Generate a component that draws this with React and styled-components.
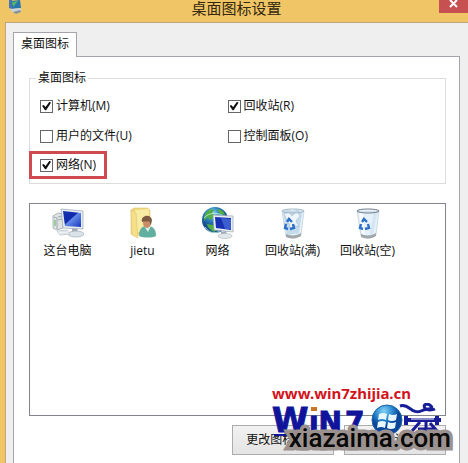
import React, { useState } from 'react';
import styled, { createGlobalStyle } from 'styled-components';

const GlobalStyle = createGlobalStyle`
  * { box-sizing: border-box; }
  body {
    margin: 0;
    overflow: hidden;
    color: #111;
    font: 12px/16px "Open Sans", "Noto Sans CJK SC", sans-serif;
  }
  button, input { font: inherit; color: inherit; }
`;

const Window = styled.main`
  display: flex;
  flex-direction: column;
  min-height: 100vh;
  padding-left: 5px;
  background: #efc566;
`;

const TitleBar = styled.header`
  display: grid;
  grid-template-columns: 34px 1fr 34px;
  align-items: start;
  height: 22px;
`;

const TitleIcon = styled.svg`
  width: 16px;
  height: 16px;
  margin-left: 2px;
`;

const Title = styled.h1`
  margin: 0;
  font-size: 15px;
  line-height: 16px;
  font-weight: 400;
  text-align: center;
  color: #33270f;
`;

const CloseButton = styled.button`
  justify-self: end;
  display: flex;
  justify-content: center;
  width: 29px;
  height: 13px;
  padding: 0;
  border: 0;
  background: #c75050;
`;

const Client = styled.div`
  flex: 1;
  display: flex;
  flex-direction: column;
  padding: 9px 8px 0 7px;
  border: solid #bda680;
  border-width: 1px 0 0 1px;
  background: #f0efef;
`;

const Tab = styled.button`
  align-self: flex-start;
  height: 25px;
  margin-bottom: -1px;
  padding: 0 7px 2px;
  border: 1px solid #a5a3ab;
  border-bottom: 0;
  background: #fff;
  z-index: 1;
`;

const Panel = styled.section`
  flex: 1;
  padding: 13px 13px 8px 15px;
  border: solid #a5a3ab;
  border-width: 1px 1px 0;
  background: #fff;
`;

const Group = styled.fieldset`
  display: grid;
  grid-template-columns: 188fr 218fr;
  align-content: start;
  row-gap: 4px;
  height: 114px;
  margin: 0;
  padding: 7px 0 0 10px;
  border: 1px solid #dcdcdc;
`;

const Legend = styled.legend`
  margin-left: -4px;
  padding: 0 2px;
`;

const CheckLabel = styled.label`
  justify-self: start;
  display: flex;
  align-items: center;
  gap: 3px;
  height: 26px;
`;

const HighlightedLabel = styled(CheckLabel)`
  height: 28px;
  margin: -2px 0 0 -11px;
  padding: 0 8px 0 8px;
  border: 3px solid #cf4a50;
`;

const CheckBox = styled.input`
  appearance: none;
  display: grid;
  place-items: center;
  width: 13px;
  height: 13px;
  margin: 0;
  border: 1px solid #666;
  background: #fff;

  &:checked::before {
    content: "";
    width: 9px;
    height: 9px;
    background: #111;
    clip-path: polygon(0 46%, 18% 38%, 40% 60%, 82% 4%, 100% 14%, 46% 96%, 34% 96%);
  }
`;

const IconList = styled.ul`
  display: flex;
  height: 213px;
  margin: 19px 0 9px;
  padding: 3px 0 0;
  border: 1px solid #82858b;
  list-style: none;
`;

const IconItem = styled.li`
  display: flex;
  flex-direction: column;
  align-items: center;
  gap: 4px;
  width: 75px;
  white-space: nowrap;

  svg { width: 32px; height: 32px; }
`;

const Actions = styled.div`
  position: relative;
  display: flex;
  justify-content: flex-end;
  gap: 10px;
`;

const ActionButton = styled.button`
  width: 102px;
  height: 30px;
  padding: 0;
  border: 1px solid #acacac;
  background: linear-gradient(#f2f2f2, #e4e4e4);
`;

const Watermark = styled.div`
  position: absolute;
  right: -5px;
  bottom: 0;
  display: grid;
  justify-items: start;
  width: 179px;
  pointer-events: none;
`;

const SiteUrl = styled.span`
  font: 700 15px/20px "Noto Sans", sans-serif;
  color: #d3131b;
`;

const Brand = styled.svg`
  width: 172px;
  height: 36px;
`;

const Stamp = styled.span`
  justify-self: end;
  margin-top: -18px;
  font: 500 26px/34px Roboto, sans-serif;
  color: #080808;
  -webkit-text-stroke: 7px #9b9290;
  paint-order: stroke fill;
`;

const Screen = ({ id }) => (
  <>
    <defs>
      <linearGradient id={id} x2="1" y2="1">
        <stop stopColor="#1830ae" />
        <stop offset=".45" stopColor="#102aad" />
        <stop offset=".5" stopColor="#668ce9" />
        <stop offset="1" stopColor="#1535bd" />
      </linearGradient>
    </defs>
    <path d="M20 21l5-1 1 6-6 1z" fill="#a3aeb6" />
    <ellipse cx="24" cy="27" rx="8" ry="3" fill="#dce3e8" stroke="#a2adb6" strokeWidth=".7" />
    <path d="M9 2l22 2v18l-20-1z" fill="#e7edf1" stroke="#97a5b5" strokeWidth=".7" />
    <path d="M11 4l18 2v14l-16-1z" fill={`url(#${id})`} />
  </>
);

const ComputerIcon = () => (
  <svg viewBox="0 0 32 32" aria-hidden="true">
    <path d="M1 9l5-3 5 1v14l-6 2-4-2z" fill="#dfe3e5" stroke="#929da5" strokeWidth=".7" />
    <path d="M2 10l3 1v11M6 10l4-1M6 13l4-1" fill="none" stroke="#9ba8ae" />
    <path d="M3 13v6" stroke="#59b84f" />
    <Screen id="pc" />
    <path d="M5 24l10-1 3 4-10 1z" fill="#f2f5f7" stroke="#b4bdc5" strokeWidth=".7" />
    <path d="M8 25l7-1M9 27l7-1" stroke="#c5ccd1" strokeWidth=".5" />
  </svg>
);

const UserIcon = () => (
  <svg viewBox="0 0 32 32" aria-hidden="true">
    <path d="M4 3l3-2h14l2 2v24l-15 1-4-1z" fill="#eed577" stroke="#e0ca7c" strokeWidth=".6" />
    <path d="M8 3l14-1v23H8z" fill="#f8eba4" />
    <path d="M4 3l5 3 2 25-6-3z" fill="#f6df86" stroke="#e0ca7c" strokeWidth=".7" />
    <path d="M12 29c0-7 3-10 8-10 6 0 9 3 9 10-4 2-12 2-17 0z" fill="#61afa0" />
    <path d="M17 19l4 6 3-6z" fill="#e1f0e7" />
    <ellipse cx="20" cy="16" rx="4" ry="5" fill="#c98d68" />
    <path d="M15 15c-2-7 9-9 10-2l-1 5-2-4c-2 1-5 0-7 1z" fill="#7d5a40" />
  </svg>
);

const NetworkIcon = () => (
  <svg viewBox="0 0 32 32" aria-hidden="true">
    <defs>
      <radialGradient id="globe" cx=".4" cy=".25">
        <stop stopColor="#a3ddf4" />
        <stop offset=".5" stopColor="#318ac3" />
        <stop offset="1" stopColor="#164f91" />
      </radialGradient>
    </defs>
    <circle cx="13" cy="13" r="13" fill="url(#globe)" />
    <path d="M3 7c4-6 8-5 9-4l-2 3 3 3-5 4-2-3-4 4zM15 2c5 0 8 4 8 6l-5-1zM5 17l6 1 4 5-3 2C7 22 5 19 5 17z" fill="#52ad47" />
    <path d="M3 20c4 6 10 7 15 4M2 11c5-6 15-6 21-1" stroke="#c3f3dc" fill="none" strokeWidth=".8" />
    <path d="M19 25l5-1 1 4-6 1z" fill="#9eacb7" />
    <ellipse cx="23" cy="29" rx="7" ry="2.5" fill="#e2e8ec" stroke="#a8b3bb" strokeWidth=".6" />
    <path d="M11 8l20 1v16l-19-2z" fill="#e7edf1" stroke="#97a5b5" strokeWidth=".7" />
    <path d="M13 10l16 1v12l-15-2z" fill="#1731b2" />
    <path d="M19 11l10 1v10l-6 0z" fill="#537be2" opacity=".6" />
  </svg>
);

const BinIcon = ({ full }) => (
  <svg viewBox="0 0 32 32" aria-hidden="true">
    <path d="M5 4l4 25c4 3 11 3 15-1l3-24z" fill="#e5f0f9" stroke="#c4d2dd" strokeWidth=".8" />
    <path d="M7 6h4l2 22-3-1z" fill="#fff" opacity=".7" />
    <path d="M22 5l3 1-4 21h-3z" fill="#cfe1f0" opacity=".7" />
    {full && (
      <>
        <path d="M6 5l4-3 5 2 5-2 5 3-3 21-12 2z" fill="#c5dced" />
        <path d="M7 7l5-2 3 4 5-5 3 5-4 5 3 6-6-2-2 6-2-8-5 1 3-4z" fill="#eef6fc" stroke="#9fb9cf" strokeWidth=".6" />
      </>
    )}
    <ellipse cx="16" cy="4" rx="11" ry="2" fill="none" stroke={full ? '#a4b6c5' : '#6b7c90'} />
    <path d="M9 27c4 2 11 2 15-1v3c-4 3-11 3-15 1z" fill="#a0a8ac" />
    <g fill="none" stroke="#2b70ca" strokeWidth="2.4">
      <path d="M10 15l2-3 3 3" />
      <path d="M16 17l1 4-4 1" />
      <path d="M11 22l-3-1 1-4" />
    </g>
  </svg>
);

const BrandLogo = () => (
  <Brand viewBox="0 0 172 36" aria-hidden="true">
    <defs>
      <radialGradient id="orb" cx=".4" cy=".2">
        <stop stopColor="#83d3f5" />
        <stop offset=".6" stopColor="#2784ce" />
        <stop offset="1" stopColor="#0b469b" />
      </radialGradient>
    </defs>
    <g fill="#10149b" stroke="#10149b" fontFamily="DejaVu Sans, sans-serif" fontWeight="700">
      <text x="0" y="29" fontSize="33">W</text>
      <text x="37" y="29" fontSize="28">ıN</text>
      <text x="73" y="29" fontSize="28">7</text>
    </g>
    <path d="M39 4h6v4h-6z" fill="#c77424" />
    <path d="M2 32h88" stroke="#10149b" strokeWidth="2" />
    <ellipse cx="115" cy="17" rx="15" ry="15" fill="url(#orb)" stroke="#1b64a8" />
    <path d="M107 11q4-2 8 0l-1 6q-4-2-8 0zM117 11q4 2 8 0l-1 6q-4 2-8 0zM106 19q4-2 8 0l-1 6q-4-2-8 0zM116 19q4 2 8 0l-1 6q-4 2-8 0z" fill="#e8f8ff" />
    <g fill="none" stroke="#171d96">
      <path d="M128 3c9-3 12 9 21 5 7-3 13-1 10-5-3-3-9-2-6 2 2 3 8 2 10 1" strokeWidth="3" />
      <path d="M134 13v9M134 17h35M165 13v9" strokeWidth="4" />
      <path d="M139 16h23" stroke="#fff" />
      <path d="M148 19l-8 9M154 19v12M158 20l8 9M146 26h16" strokeWidth="3" />
    </g>
  </Brand>
);

const OPTIONS = [
  { label: '计算机(M)', checked: true },
  { label: '回收站(R)', checked: true },
  { label: '用户的文件(U)', checked: false },
  { label: '控制面板(O)', checked: false },
  { label: '网络(N)', checked: true, highlighted: true },
];

const ICONS = [
  ['这台电脑', <ComputerIcon />],
  ['jietu', <UserIcon />],
  ['网络', <NetworkIcon />],
  ['回收站(满)', <BinIcon full />],
  ['回收站(空)', <BinIcon />],
];

function Option({ option }) {
  const [checked, setChecked] = useState(option.checked);
  const Label = option.highlighted ? HighlightedLabel : CheckLabel;
  return (
    <Label>
      <CheckBox type="checkbox" checked={checked} onChange={(e) => setChecked(e.target.checked)} />
      {option.label}
    </Label>
  );
}

export default function App() {
  return (
    <Window>
      <GlobalStyle />
      <TitleBar>
        <TitleIcon viewBox="0 0 16 16" aria-hidden="true">
          <path d="M2 0h3v9l-3-1z" fill="#4b74b5" />
          <path d="M4 1l9-1 1 8-9 1z" fill="#2677ad" />
          <path d="M5 2l6-1-5 6z" fill="#55b66b" />
          <path d="M3 9l11-1v3l-9 1z" fill="#c8d4da" />
          <path d="M6 12l7-2 1 2-5 2z" fill="#8394a4" />
        </TitleIcon>
        <Title>桌面图标设置</Title>
        <CloseButton aria-label="关闭">
          <svg width="10" height="9" viewBox="0 0 10 9" aria-hidden="true">
            <path d="M1 0l7 7M8 0L1 7" stroke="#fff" strokeWidth="2" />
          </svg>
        </CloseButton>
      </TitleBar>
      <Client>
        <Tab role="tab" aria-selected="true">桌面图标</Tab>
        <Panel>
          <Group>
            <Legend>桌面图标</Legend>
            {OPTIONS.map((option) => <Option key={option.label} option={option} />)}
          </Group>
          <IconList>
            {ICONS.map(([name, icon]) => (
              <IconItem key={name}>{icon}<span>{name}</span></IconItem>
            ))}
          </IconList>
          <Actions>
            <ActionButton>更改图标(H)...</ActionButton>
            <ActionButton>还原默认值(S)</ActionButton>
            <Watermark>
              <SiteUrl>www.win7zhijia.cn</SiteUrl>
              <BrandLogo />
              <Stamp>xiazaima.com</Stamp>
            </Watermark>
          </Actions>
        </Panel>
      </Client>
    </Window>
  );
}
